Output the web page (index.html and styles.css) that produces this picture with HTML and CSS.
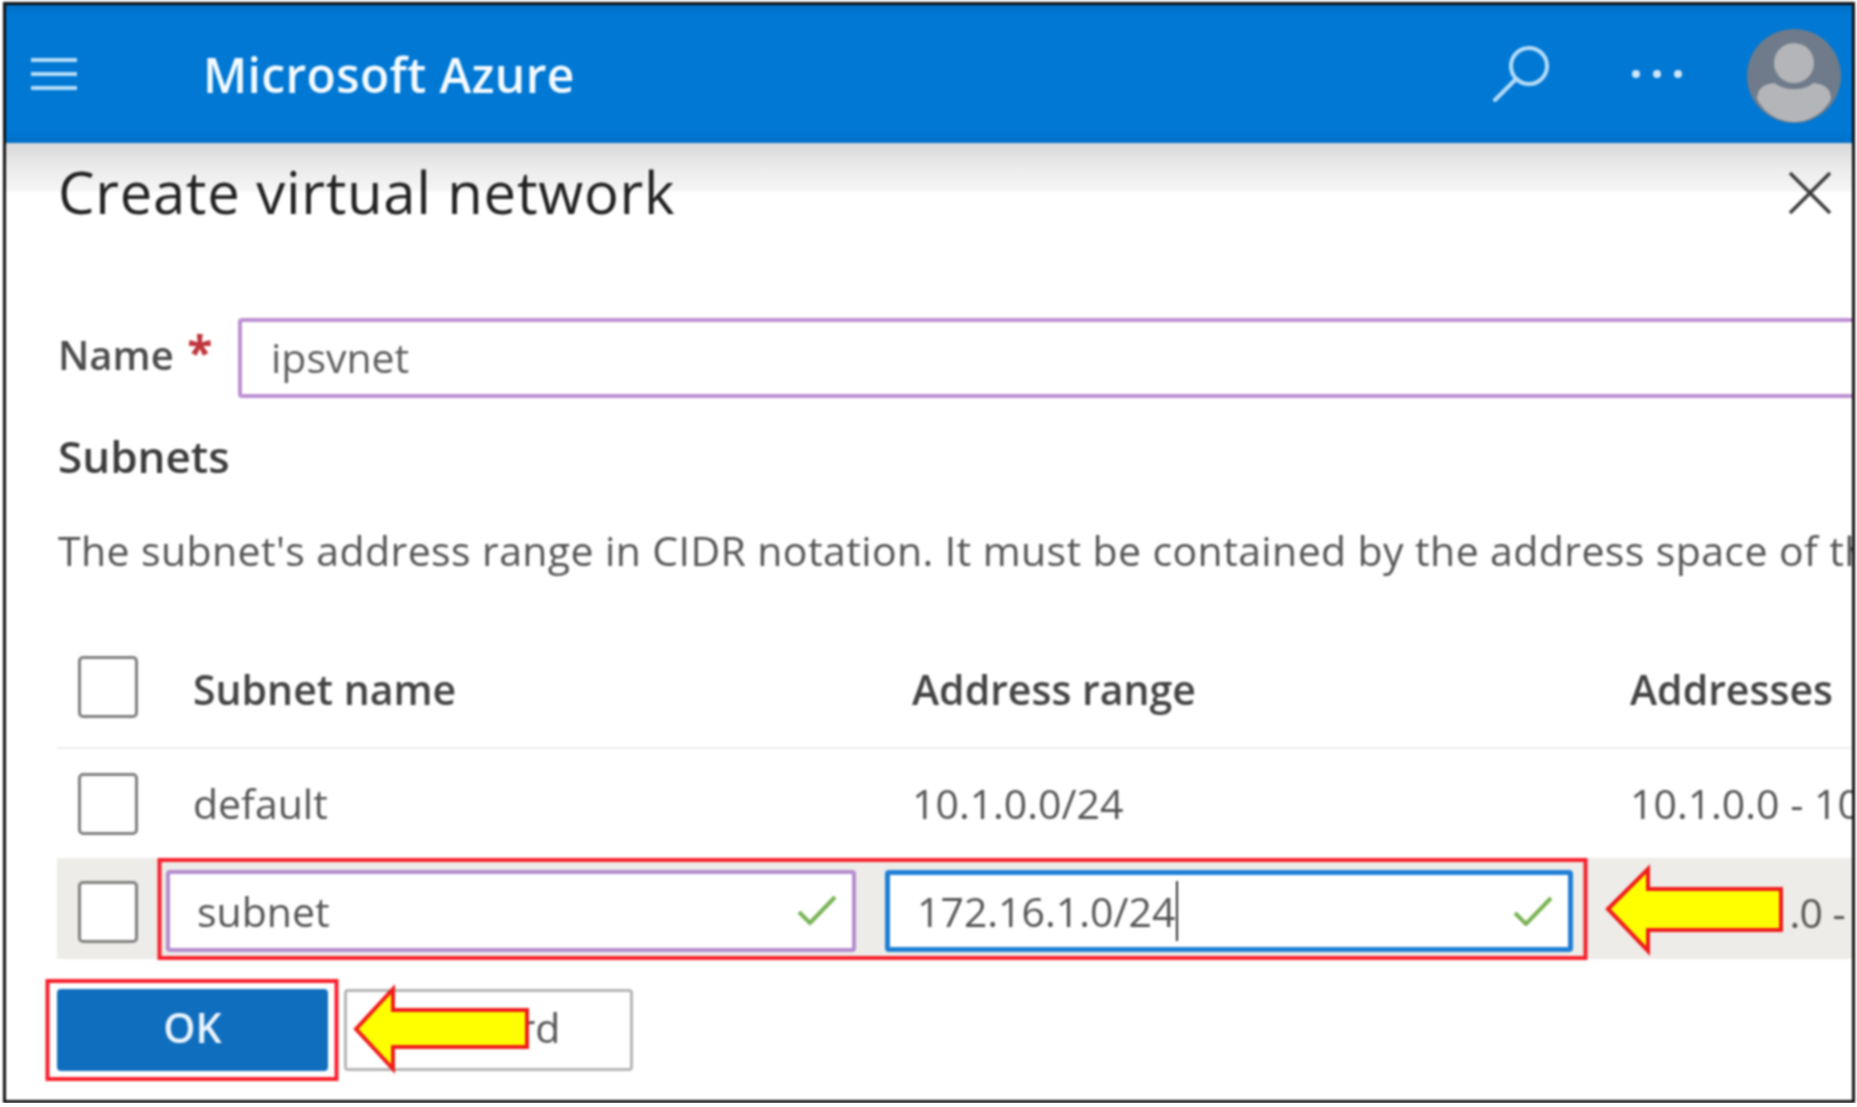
FILE: index.html
```
<!DOCTYPE html>
<html lang="en">
<head>
<meta charset="utf-8">
<title>Create virtual network</title>
<link rel="stylesheet" href="styles.css">
</head>
<body>
<div class="frame">
  <header class="topbar">
    <svg class="hamburger" width="48" height="36" viewBox="0 0 48 36"><path d="M1 4H47M1 18H47M1 32H47"/></svg>
    <div class="brand">Microsoft Azure</div>
    <svg class="search" width="56" height="58" viewBox="0 0 56 58"><circle cx="36" cy="21" r="18"/><path d="M23 34L2 55"/></svg>
    <div class="dots"><i></i><i></i><i></i></div>
    <svg class="avatar" width="94" height="94" viewBox="0 0 94 94"><circle class="av-bg" cx="47" cy="47" r="47"/><circle class="av-fg" cx="47" cy="34" r="20"/><path class="av-fg" d="M10 70C10 60 16 55 28 54C36 62 58 62 66 54C78 55 84 60 84 70C76 86 60 93 47 93C34 93 18 86 10 70Z"/></svg>
  </header>
  <main class="panel">
    <div class="title-row">
      <h1 class="title">Create virtual network</h1>
      <svg class="close" width="44" height="42" viewBox="0 0 44 42"><path d="M2 1L42 41M42 1L2 41"/></svg>
    </div>
    <div class="name-row">
      <label class="name-label">Name <span class="star">*</span></label>
      <div class="name-input">ipsvnet</div>
    </div>
    <h2 class="subnets">Subnets</h2>
    <p class="desc">The subnet's address range in CIDR notation. It must be contained by the address space of the virtual network.</p>
    <div class="table">
      <div class="row row-head">
        <span class="check"></span><span>Subnet name</span><span>Address range</span><span>Addresses</span>
      </div>
      <div class="row row-default">
        <span class="check"></span><span>default</span><span>10.1.0.0/24</span><span>10.1.0.0 - 10.1.0.255</span>
      </div>
      <div class="row row-edit">
        <span class="check"></span>
        <div class="field field-name">subnet
          <svg class="tick" width="40" height="30" viewBox="0 0 40 30"><path d="M2 17L13 28L38 2"/></svg>
        </div>
        <div class="field field-range"><span class="typed">172.16.1.0/24</span>
          <svg class="tick" width="40" height="30" viewBox="0 0 40 30"><path d="M2 17L13 28L38 2"/></svg>
        </div>
        <span class="range-out">172.16.1.0 - 172.16.1.255</span>
      </div>
    </div>
    <div class="actions">
      <button class="btn btn-ok">OK</button>
      <button class="btn btn-discard">Discard</button>
    </div>
  </main>
  <svg class="overlay" width="1847" height="1096" viewBox="6 5 1847 1096">
    <rect class="mark" x="159.5" y="860" width="1426" height="98"/>
    <rect class="mark" x="47.5" y="981" width="289" height="98"/>
    <path class="arrow" d="M356 1029L393 989V1010H527V1047H393V1069Z"/>
    <path class="arrow" d="M1608 909L1648 869V889H1781V930H1648V951Z"/>
  </svg>
</div>
</body>
</html>
```
FILE: styles.css
```
* { box-sizing: border-box; }
html, body { margin: 0; background: #fff; }
body { font-family: "Open Sans", "Noto Sans", sans-serif; overflow: hidden; }
.frame {
  position: relative;
  margin: 2px 0 0 3px;
  width: 1852px;
  height: 1101px;
  border: 3px solid #111;
  overflow: hidden;
  filter: blur(0.9px);
}
.topbar {
  display: flex;
  align-items: center;
  height: 138px;
  background: linear-gradient(#006fc4 0, #0078d4 10px, #0078d4 126px, #0070c8 138px);
  color: #fff;
  padding-left: 24px;
}
.hamburger { flex: none; }
.hamburger path { stroke: #b5dcf7; stroke-width: 4; fill: none; }
.brand { margin-left: 125px; font-size: 48px; font-weight: 600; letter-spacing: 0.35px; white-space: nowrap; color: #f4faff; }
.search { margin-left: auto; flex: none; }
.search circle, .search path { stroke: #b5dcf7; stroke-width: 4; fill: none; stroke-linecap: round; }
.dots { display: flex; gap: 13px; margin-left: 83px; }
.dots i { width: 8px; height: 8px; border-radius: 50%; background: #cfe7fa; }
.avatar { margin: 4px 11px 0 65px; flex: none; }
.av-bg { fill: #6f7b8a; }
.av-fg { fill: #b4b5b9; }
.panel {
  height: 958px;
  padding-left: 52px;
  background: linear-gradient(#d9d9d9 0, #ececec 26px, #f6f6f6 48px, #fff 49px);
}
.title-row { display: flex; align-items: center; justify-content: space-between; height: 98px; padding-right: 20px; }
.title { margin: 0 0 2px; font-size: 58px; font-weight: 400; color: #222; letter-spacing: 0.7px; white-space: nowrap; }
.close { margin-top: 1px; }
.close path { stroke: #3c3c3c; stroke-width: 3.5; fill: none; }
.name-row { display: flex; align-items: center; margin-top: 77px; }
.name-label { width: 180px; flex: none; font-size: 40px; font-weight: 600; color: #4c4c4c; margin-top: -8px; white-space: nowrap; }
.star { color: #c0343c; font-size: 46px; font-weight: 700; line-height: 0; margin-left: 3px; }
.name-input {
  flex: none;
  width: 1640px;
  height: 80px;
  padding: 0 0 3px 29px;
  display: flex;
  align-items: center;
  border: 4px solid #bc8fd2;
  border-radius: 4px;
  font-size: 41px;
  color: #5e5e5e;
}
.subnets { margin: 28px 0 0; font-size: 44px; line-height: 60px; font-weight: 600; color: #3c3c3c; }
.desc { margin: 39px 0 0; font-size: 41px; line-height: 50px; color: #555; white-space: nowrap; letter-spacing: 0.4px; }
.table { margin: 51px 0 0 -1px; font-size: 41px; color: #555; }
.row { display: grid; grid-template-columns: 136px 719px 718px 1fr; align-items: center; white-space: nowrap; }
.check { width: 60px; height: 62px; margin-left: 21px; border: 3px solid #808080; border-radius: 5px; background: #fff; }
.row-head { height: 123px; border-bottom: 2px solid #ececec; font-weight: 600; color: #444; }
.row-head > span:not(.check) { margin-top: 4px; }
.row-default { height: 109px; }
.row-default > span:not(.check) { margin-bottom: 2px; }
.row-edit { height: 101px; background: #edece8; }
.row-edit .check { margin-top: 6px; }
.field {
  position: relative;
  display: flex;
  align-items: center;
  height: 82px;
  margin-top: 4px;
  background: #fff;
  border-radius: 4px;
}
.field-name { width: 690px; margin-left: -27px; padding-left: 27px; border: 4px solid #b48ccf; }
.field-range { width: 688px; margin-left: -27px; padding-left: 27px; border: 5px solid #1f7fd6; }
.typed { border-right: 2px solid #333; padding-right: 1px; line-height: 60px; }
.tick { position: absolute; right: 15px; top: 21px; }
.range-out { margin-left: 2px; margin-top: 6px; letter-spacing: -0.6px; }
.tick path { stroke: #7ab356; stroke-width: 4; fill: none; }
.actions { display: flex; gap: 16px; margin: 30px 0 0 -1px; }
.btn { height: 82px; border-radius: 4px; font-family: inherit; font-size: 41px; line-height: 70px; padding: 0 0 6px; }
.btn-ok { width: 271px; background: #106ebe; border: 0; color: #eaf4fc; font-weight: 600; }
.btn-discard { width: 289px; background: #fff; border: 3px solid #b5b5b5; color: #555; font-weight: 400; }
.overlay { position: absolute; left: 0; top: 0; pointer-events: none; }
.mark { fill: none; stroke: #f8202c; stroke-width: 4; }
.arrow { fill: #ffff00; stroke: #f01c1c; stroke-width: 4; stroke-linejoin: miter; }
```
